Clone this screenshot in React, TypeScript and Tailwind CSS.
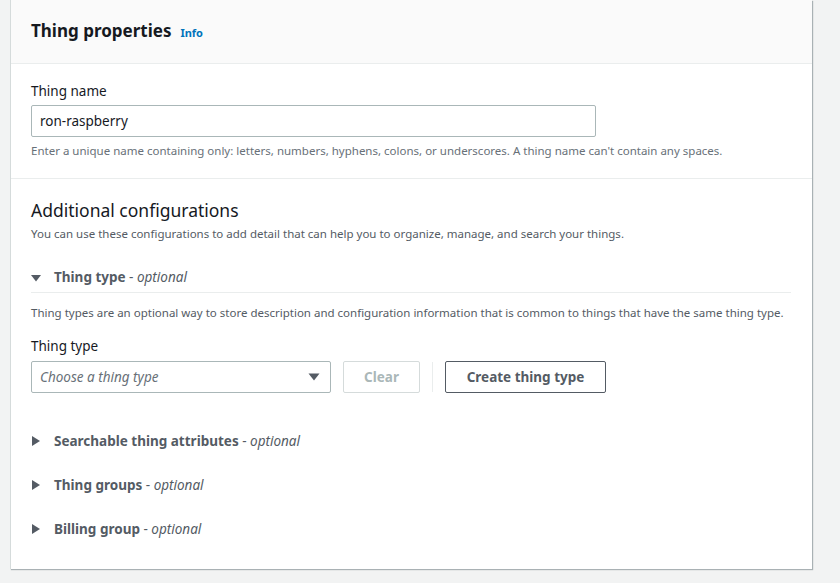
import { ReactNode } from 'react';

function Caret({ open }: { open?: boolean }) {
  return open ? (
    <svg width="10" height="10" viewBox="0 0 10 10" className="shrink-0">
      <path d="M0 2h10L5 8.5z" fill="#545b64" />
    </svg>
  ) : (
    <svg width="10" height="10" viewBox="0 0 10 10" className="shrink-0">
      <path d="M1 0v10L9 5z" fill="#545b64" />
    </svg>
  );
}

function Expander({ label, open, children }: { label: string; open?: boolean; children?: ReactNode }) {
  return (
    <div>
      <div
        className={`flex items-center gap-[13px] h-[30px] text-[13.5px] text-[#545b64] ${
          open ? 'border-b border-[#eaeded]' : ''
        }`}
      >
        <Caret open={open} />
        <span>
          <span className="font-bold">{label}</span> - <i>optional</i>
        </span>
      </div>
      {children}
    </div>
  );
}

export default function App() {
  return (
    <div className="min-h-[583px] bg-[#f2f3f3] pl-[10px] pb-[12px] font-['Noto_Sans',sans-serif] text-[#16191f]">
      <div className="w-[802px] bg-white border-l border-[#d5dbdb] shadow-[1px_1px_1px_0_rgba(0,28,36,0.3)]">
        {/* header */}
        <div className="h-[64px] bg-[#fafafa] border-b border-[#eaeded] px-5 pb-[2px] flex items-center">
          <h2 className="text-[17px] font-bold leading-none">Thing properties</h2>
          <a className="ml-[9px] mt-[6px] text-[11px] font-bold text-[#0073bb]">Info</a>
        </div>

        {/* thing name */}
        <div className="px-5 pt-[16px] pb-[18px] border-b border-[#eaeded]">
          <label className="block text-[13.5px] leading-[22px]">Thing name</label>
          <div className="mt-[3px] w-[565px] h-[32px] border border-[#aab7b8] rounded-[2px] flex items-center px-2 text-[13.5px]">
            ron-raspberry
          </div>
          <p className="mt-[5px] text-[11.5px] leading-[18px] text-[#687078]">
            Enter a unique name containing only: letters, numbers, hyphens, colons, or underscores. A thing name can't contain any spaces.
          </p>
        </div>

        {/* additional configurations */}
        <div className="px-5 pt-[19px] pb-[25px]">
          <h3 className="text-[17.5px] leading-[24px]">Additional configurations</h3>
          <p className="mt-[3px] text-[11.5px] leading-[18px] text-[#545b64]">
            You can use these configurations to add detail that can help you to organize, manage, and search your things.
          </p>

          <div className="mt-[20px] mr-[1px]">
            <Expander label="Thing type" open>
              <p className="mt-[11px] text-[11.5px] leading-[18px] text-[#545b64]">
                Thing types are an optional way to store description and configuration information that is common to things that have the same thing type.
              </p>
              <label className="block mt-[13px] text-[13.5px] leading-[22px]">Thing type</label>
              <div className="flex items-center mt-[4px]">
                <div className="w-[300px] h-[32px] border border-[#aab7b8] rounded-[2px] flex items-center justify-between pl-2 pr-[10px] text-[13.5px] italic text-[#687078]">
                  Choose a thing type
                  <svg width="12" height="10" viewBox="0 0 12 10">
                    <path d="M0.5 1.5h11L6 8.5z" fill="#545b64" />
                  </svg>
                </div>
                <button className="ml-[12px] w-[77px] h-[32px] border border-[#d5dbdb] rounded-[2px] text-[13.5px] font-bold text-[#aab7b8]">
                  Clear
                </button>
                <div className="mx-[12px] w-px h-[30px] bg-[#eaeded]" />
                <button className="w-[161px] h-[32px] border border-[#545b64] rounded-[2px] text-[13.5px] font-bold text-[#545b64]">
                  Create thing type
                </button>
              </div>
            </Expander>
          </div>

          <div className="mt-[33px] flex flex-col gap-[14px]">
            <Expander label="Searchable thing attributes" />
            <Expander label="Thing groups" />
            <Expander label="Billing group" />
          </div>
        </div>
      </div>
    </div>
  );
}
